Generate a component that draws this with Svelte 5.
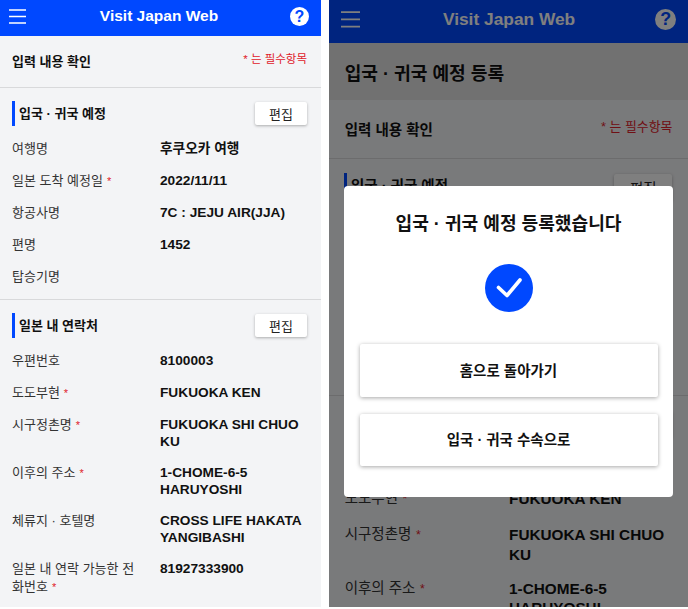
<script>
  const plan = [
    { label: '여행명', value: '후쿠오카 여행' },
    { label: '일본 도착 예정일', req: true, value: '2022/11/11' },
    { label: '항공사명', value: '7C : JEJU AIR(JJA)' },
    { label: '편명', value: '1452' },
    { label: '탑승기명', value: '' }
  ];
  const contact = [
    { label: '우편번호', value: '8100003' },
    { label: '도도부현', req: true, value: 'FUKUOKA KEN' },
    { label: '시구정촌명', req: true, value: 'FUKUOKA SHI CHUO KU' },
    { label: '이후의 주소', req: true, value: '1-CHOME-6-5 HARUYOSHI' },
    { label: '체류지 · 호텔명', value: 'CROSS LIFE HAKATA YANGIBASHI' },
    { label: '일본 내 연락 가능한 전화번호', req: true, value: '81927333900' }
  ];
</script>

{#snippet section(title, rows)}
  <section class="section">
    <div class="section-head">
      <h3>{title}</h3>
      <button class="edit">편집</button>
    </div>
    {#each rows as r}
      <div class="row">
        <span class="label">{r.label}{#if r.req}<span class="star">*</span>{/if}</span>
        <span class="value">{r.value}</span>
      </div>
    {/each}
  </section>
{/snippet}

{#snippet screen()}
  <header class="topbar">
    <svg class="menu" width="17" height="15" viewBox="0 0 17 15">
      <path d="M0 1h17M0 7.5h17M0 14h17" stroke="#fff" stroke-width="1.5" />
    </svg>
    <span class="brand">Visit Japan Web</span>
    <span class="help">?</span>
  </header>
{/snippet}

{#snippet body()}
  <div class="confirm">
    <h2>입력 내용 확인</h2>
    <span class="note">* 는 필수항목</span>
  </div>
  {@render section('입국 · 귀국 예정', plan)}
  {@render section('일본 내 연락처', contact)}
{/snippet}

<div class="shots">
  <div class="phone left">
    <div class="page">
      {@render screen()}
      {@render body()}
    </div>
  </div>

  <div class="phone right">
    <div class="page large">
      {@render screen()}
      <div class="band">입국 · 귀국 예정 등록</div>
      {@render body()}
    </div>
    <div class="overlay">
      <div class="modal">
        <h2>입국 · 귀국 예정 등록했습니다</h2>
        <svg class="check" width="48" height="48" viewBox="0 0 48 48">
          <circle cx="24" cy="24" r="24" fill="#0048ff" />
          <path d="M13.5 23.5L22 31.5L35 16" fill="none" stroke="#fff" stroke-width="3.6" stroke-linecap="round" stroke-linejoin="round" />
        </svg>
        <button class="action">홈으로 돌아가기</button>
        <button class="action">입국 · 귀국 수속으로</button>
      </div>
    </div>
  </div>
</div>

<style>
  :global(body) {
    background: #fff;
  }
  .shots {
    display: flex;
    gap: 8px;
    height: 607px;
    font-family: "Liberation Sans", "Noto Sans CJK KR", sans-serif;
    color: #111;
  }
  .phone {
    position: relative;
    overflow: hidden;
    background: #f3f4f6;
  }
  .left { width: 321px; }
  .right { width: 359px; }
  .page { width: 321px; }
  .large { zoom: 1.1184; }

  .topbar {
    display: flex;
    align-items: center;
    justify-content: space-between;
    height: 36px;
    padding: 0 12px 4px 9px;
    box-sizing: border-box;
    background: #0048ff;
  }
  .large .topbar {
    height: 38.5px;
    padding-left: 10.5px;
    padding-right: 10.5px;
  }
  .brand {
    margin-left: 2px;
    font-size: 15.5px;
    font-weight: 700;
    color: #fff;
  }
  .large .brand { margin-left: 3px; }
  .help {
    width: 19px;
    height: 19px;
    border-radius: 50%;
    background: #fff;
    color: #0048ff;
    font-size: 16px;
    font-weight: 700;
    line-height: 19px;
    text-align: center;
  }
  .band {
    height: 51px;
    display: flex;
    align-items: center;
    padding: 0 14px;
    background: #e2e2e2;
    font-size: 16.2px;
    font-weight: 700;
  }
  .confirm {
    display: flex;
    justify-content: space-between;
    height: 52px;
    padding: 0 14px 2px 12px;
    border-bottom: 1px solid #d8d9db;
    box-sizing: border-box;
    align-items: center;
  }
  .large .confirm {
    height: 52.5px;
    padding-bottom: 0;
  }
  .confirm h2 {
    margin: 0;
    font-size: 13px;
    font-weight: 700;
  }
  .note {
    margin-top: -6px;
    font-size: 11.5px;
    color: #e0202a;
  }
  .section {
    padding: 13px 14px 6px 12px;
    border-bottom: 1px solid #d8d9db;
  }
  .large .confirm,
  .large .section { padding-left: 14px; }
  .section:last-child { border-bottom: 0; }
  .section-head {
    display: flex;
    justify-content: space-between;
    align-items: center;
    height: 25px;
    margin-bottom: 7px;
  }
  .section-head h3 {
    margin: 0;
    padding-left: 4px;
    border-left: 3px solid #0048ff;
    font-size: 13px;
    font-weight: 700;
    line-height: 25px;
  }
  .large .section-head h3 { margin-left: -1px; }
  .edit {
    width: 52px;
    height: 23px;
    padding: 0;
    border: 0;
    border-radius: 2px;
    background: #fff;
    box-shadow: 0 1px 3px rgba(0, 0, 0, 0.3);
    font: inherit;
    font-size: 13px;
    color: #222;
  }
  .row {
    display: grid;
    grid-template-columns: 148px 1fr;
    min-height: 32px;
    padding: 6.5px 0;
    box-sizing: border-box;
    font-size: 13px;
    line-height: 17.6px;
  }
  .large .row { grid-template-columns: 147px 1fr; }
  .label {
    padding-right: 20px;
    color: #333;
    word-break: break-all;
  }
  .star {
    margin-left: 4px;
    color: #e0202a;
    font-size: 11px;
  }
  .value {
    font-weight: 700;
    font-size: 13.7px;
  }

  .overlay {
    position: absolute;
    inset: 0;
    padding-top: 186px;
    display: flex;
    flex-direction: column;
    align-items: center;
    background: rgba(0, 0, 0, 0.5);
  }
  .modal {
    width: 329px;
    height: 311px;
    padding: 0 15.5px;
    box-sizing: border-box;
    border-radius: 4px;
    background: #fff;
    display: flex;
    flex-direction: column;
    align-items: center;
  }
  .modal h2 {
    margin: 24px 0 0;
    font-size: 18.1px;
    font-weight: 700;
    line-height: 28px;
  }
  .check { margin-top: 26px; }
  .action {
    width: 100%;
    height: 52.5px;
    flex: none;
    margin-top: 17px;
    padding: 0 0 2px;
    border: 0;
    border-radius: 2px;
    background: #fff;
    box-shadow: 0 1px 4px rgba(0, 0, 0, 0.35);
    font: inherit;
    font-size: 14.5px;
    font-weight: 700;
    color: #111;
  }
  .check + .action { margin-top: 32px; }
</style>
